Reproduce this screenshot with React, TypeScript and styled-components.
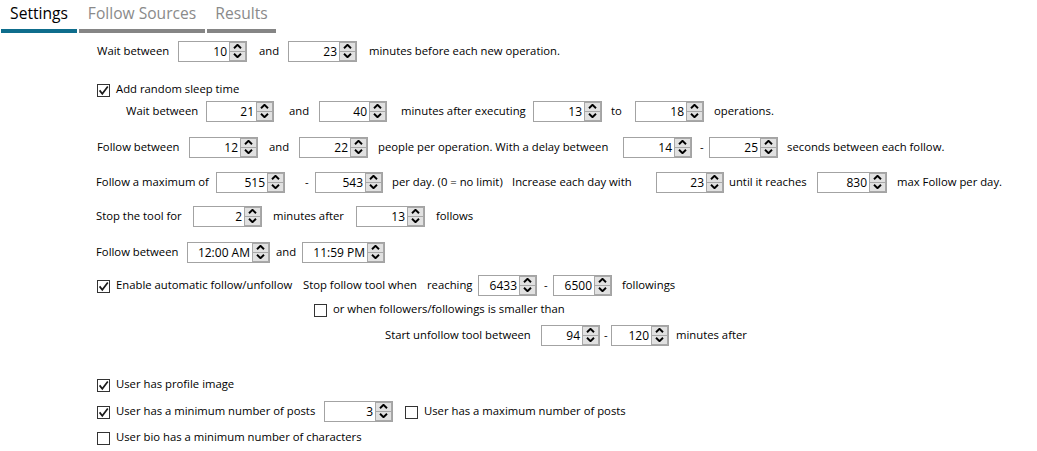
import styled, { createGlobalStyle } from 'styled-components';

const GlobalStyle = createGlobalStyle`
  html, body {
    margin: 0;
    padding: 0;
    background: #fff;
  }
  body {
    font-family: "Segoe UI", "Open Sans", "Noto Sans", sans-serif;
    font-size: 11.3px;
    color: #000;
  }
`;

const Page = styled.div`
  width: 1037px;
  height: 451px;
  overflow: hidden;
  background: #fff;
`;

const TabBar = styled.div`
  display: flex;
  gap: 2px;
  padding-left: 1px;
`;

const Tab = styled.div<{ $active?: boolean; $w: number }>`
  width: ${(p) => p.$w}px;
  height: 29px;
  line-height: 26px;
  text-align: center;
  font-size: 15.6px;
  color: ${(p) => (p.$active ? '#000' : '#8a8a8a')};
  border-bottom: 4px solid ${(p) => (p.$active ? '#0e6d8c' : '#858585')};
`;

const Form = styled.div`
  display: flex;
  flex-direction: column;
`;

const Row = styled.div<{ $mt: number; $pl: number }>`
  display: flex;
  align-items: center;
  height: 20px;
  margin-top: ${(p) => p.$mt}px;
  padding-left: ${(p) => p.$pl}px;
`;

const Cell = styled.div<{ $w?: number }>`
  flex: none;
  width: ${(p) => (p.$w ? `${p.$w}px` : 'auto')};
  display: flex;
  align-items: center;
  white-space: nowrap;
`;

const Label = styled.span`
  line-height: 16px;
`;

const SpinBox = styled.div<{ $w: number }>`
  width: ${(p) => p.$w}px;
  height: 21px;
  box-sizing: border-box;
  border: 1px solid #a3a3a3;
  background: #fff;
  display: flex;
  align-items: stretch;
`;

const SpinValue = styled.div`
  flex: 1;
  text-align: right;
  padding-right: 2px;
  line-height: 19px;
  font-size: 12px;
`;

const SpinButtons = styled.div`
  width: 17px;
  display: flex;
  flex-direction: column;
`;

const SpinButton = styled.div`
  flex: 1;
  border: 1px solid #a8a8a8;
  background: #e1e1e1;
  display: flex;
  align-items: center;
  justify-content: center;
  & + & {
    border-top: none;
  }
`;

const CheckWrap = styled.label`
  display: flex;
  align-items: center;
  gap: 6px;
`;

const CheckBox = styled.span`
  width: 13px;
  height: 13px;
  box-sizing: border-box;
  border: 1px solid #333;
  background: #fff;
  display: inline-flex;
  align-items: center;
  justify-content: center;
  margin-top: 3px;
`;

const Arrow = ({ down }: { down?: boolean }) => (
  <svg width="9" height="5" viewBox="0 0 9 5">
    <path
      d={down ? 'M1 0.8 L4.5 4.2 L8 0.8' : 'M1 4.2 L4.5 0.8 L8 4.2'}
      fill="none"
      stroke="#000"
      strokeWidth="1.9"
    />
  </svg>
);

const Spinner = ({ value, w }: { value: string; w: number }) => (
  <SpinBox $w={w}>
    <SpinValue>{value}</SpinValue>
    <SpinButtons>
      <SpinButton>
        <Arrow />
      </SpinButton>
      <SpinButton>
        <Arrow down />
      </SpinButton>
    </SpinButtons>
  </SpinBox>
);

const Check = ({ checked, label }: { checked?: boolean; label: string }) => (
  <CheckWrap>
    <CheckBox>
      {checked && (
        <svg width="11" height="11" viewBox="0 0 11 11">
          <path d="M1.6 5.4 L4.3 8.8 L9.8 1.6" fill="none" stroke="#1a1a1a" strokeWidth="1.7" />
        </svg>
      )}
    </CheckBox>
    <Label>{label}</Label>
  </CheckWrap>
);

type Item =
  | { x: number; kind: 'text'; text: string }
  | { x: number; kind: 'spin'; value: string; w: number }
  | { x: number; kind: 'check'; text: string; checked?: boolean };

interface RowData {
  mt: number;
  items: Item[];
}

const rows: RowData[] = [
  {
    mt: 8,
    items: [
      { x: 97, kind: 'text', text: 'Wait between' },
      { x: 178, kind: 'spin', value: '10', w: 69 },
      { x: 259, kind: 'text', text: 'and' },
      { x: 288, kind: 'spin', value: '23', w: 69 },
      { x: 369, kind: 'text', text: 'minutes before each new operation.' },
    ],
  },
  {
    mt: 18,
    items: [{ x: 97, kind: 'check', text: 'Add random sleep time', checked: true }],
  },
  {
    mt: 2,
    items: [
      { x: 126, kind: 'text', text: 'Wait between' },
      { x: 206, kind: 'spin', value: '21', w: 68 },
      { x: 289, kind: 'text', text: 'and' },
      { x: 319, kind: 'spin', value: '40', w: 68 },
      { x: 401, kind: 'text', text: 'minutes after executing' },
      { x: 533, kind: 'spin', value: '13', w: 69 },
      { x: 611, kind: 'text', text: 'to' },
      { x: 635, kind: 'spin', value: '18', w: 69 },
      { x: 714, kind: 'text', text: 'operations.' },
    ],
  },
  {
    mt: 16,
    items: [
      { x: 97, kind: 'text', text: 'Follow between' },
      { x: 189, kind: 'spin', value: '12', w: 69 },
      { x: 269, kind: 'text', text: 'and' },
      { x: 299, kind: 'spin', value: '22', w: 69 },
      { x: 378, kind: 'text', text: 'people per operation. With a delay between' },
      { x: 623, kind: 'spin', value: '14', w: 69 },
      { x: 700, kind: 'text', text: '-' },
      { x: 709, kind: 'spin', value: '25', w: 69 },
      { x: 787, kind: 'text', text: 'seconds between each follow.' },
    ],
  },
  {
    mt: 15,
    items: [
      { x: 96, kind: 'text', text: 'Follow a maximum of' },
      { x: 216, kind: 'spin', value: '515', w: 69 },
      { x: 305, kind: 'text', text: '-' },
      { x: 315, kind: 'spin', value: '543', w: 68 },
      { x: 392, kind: 'text', text: 'per day. (0 = no limit)' },
      { x: 512, kind: 'text', text: 'Increase each day with' },
      { x: 656, kind: 'spin', value: '23', w: 68 },
      { x: 729, kind: 'text', text: 'until it reaches' },
      { x: 817, kind: 'spin', value: '830', w: 70 },
      { x: 897, kind: 'text', text: 'max Follow per day.' },
    ],
  },
  {
    mt: 14,
    items: [
      { x: 96, kind: 'text', text: 'Stop the tool for' },
      { x: 193, kind: 'spin', value: '2', w: 69 },
      { x: 273, kind: 'text', text: 'minutes after' },
      { x: 356, kind: 'spin', value: '13', w: 69 },
      { x: 436, kind: 'text', text: 'follows' },
    ],
  },
  {
    mt: 16,
    items: [
      { x: 96, kind: 'text', text: 'Follow between' },
      { x: 187, kind: 'spin', value: '12:00 AM', w: 83 },
      { x: 276, kind: 'text', text: 'and' },
      { x: 302, kind: 'spin', value: '11:59 PM', w: 83 },
    ],
  },
  {
    mt: 13,
    items: [
      { x: 97, kind: 'check', text: 'Enable automatic follow/unfollow', checked: true },
      { x: 303, kind: 'text', text: 'Stop follow tool when' },
      { x: 427, kind: 'text', text: 'reaching' },
      { x: 478, kind: 'spin', value: '6433', w: 59 },
      { x: 544, kind: 'text', text: '-' },
      { x: 553, kind: 'spin', value: '6500', w: 59 },
      { x: 622, kind: 'text', text: 'followings' },
    ],
  },
  {
    mt: 4,
    items: [{ x: 314, kind: 'check', text: 'or when followers/followings is smaller than' }],
  },
  {
    mt: 6,
    items: [
      { x: 385, kind: 'text', text: 'Start unfollow tool between' },
      { x: 541, kind: 'spin', value: '94', w: 59 },
      { x: 604, kind: 'text', text: '-' },
      { x: 611, kind: 'spin', value: '120', w: 58 },
      { x: 676, kind: 'text', text: 'minutes after' },
    ],
  },
  {
    mt: 29,
    items: [{ x: 97, kind: 'check', text: 'User has profile image', checked: true }],
  },
  {
    mt: 7,
    items: [
      { x: 97, kind: 'check', text: 'User has a minimum number of posts', checked: true },
      { x: 324, kind: 'spin', value: '3', w: 69 },
      { x: 405, kind: 'check', text: 'User has a maximum number of posts' },
    ],
  },
  {
    mt: 6,
    items: [{ x: 97, kind: 'check', text: 'User bio has a minimum number of characters' }],
  },
];

const renderItem = (item: Item) => {
  switch (item.kind) {
    case 'text':
      return <Label>{item.text}</Label>;
    case 'spin':
      return <Spinner value={item.value} w={item.w} />;
    case 'check':
      return <Check checked={item.checked} label={item.text} />;
  }
};

const tabs = [
  { name: 'Settings', w: 76, active: true },
  { name: 'Follow Sources', w: 126 },
  { name: 'Results', w: 69 },
];

export default function App() {
  return (
    <Page>
      <GlobalStyle />
      <TabBar>
        {tabs.map((t) => (
          <Tab key={t.name} $w={t.w} $active={t.active}>
            {t.name}
          </Tab>
        ))}
      </TabBar>
      <Form>
        {rows.map((row, ri) => (
          <Row key={ri} $mt={row.mt} $pl={row.items[0].x}>
            {row.items.map((item, ii) => {
              const next = row.items[ii + 1];
              return (
                <Cell key={ii} $w={next ? next.x - item.x : undefined}>
                  {renderItem(item)}
                </Cell>
              );
            })}
          </Row>
        ))}
      </Form>
    </Page>
  );
}
